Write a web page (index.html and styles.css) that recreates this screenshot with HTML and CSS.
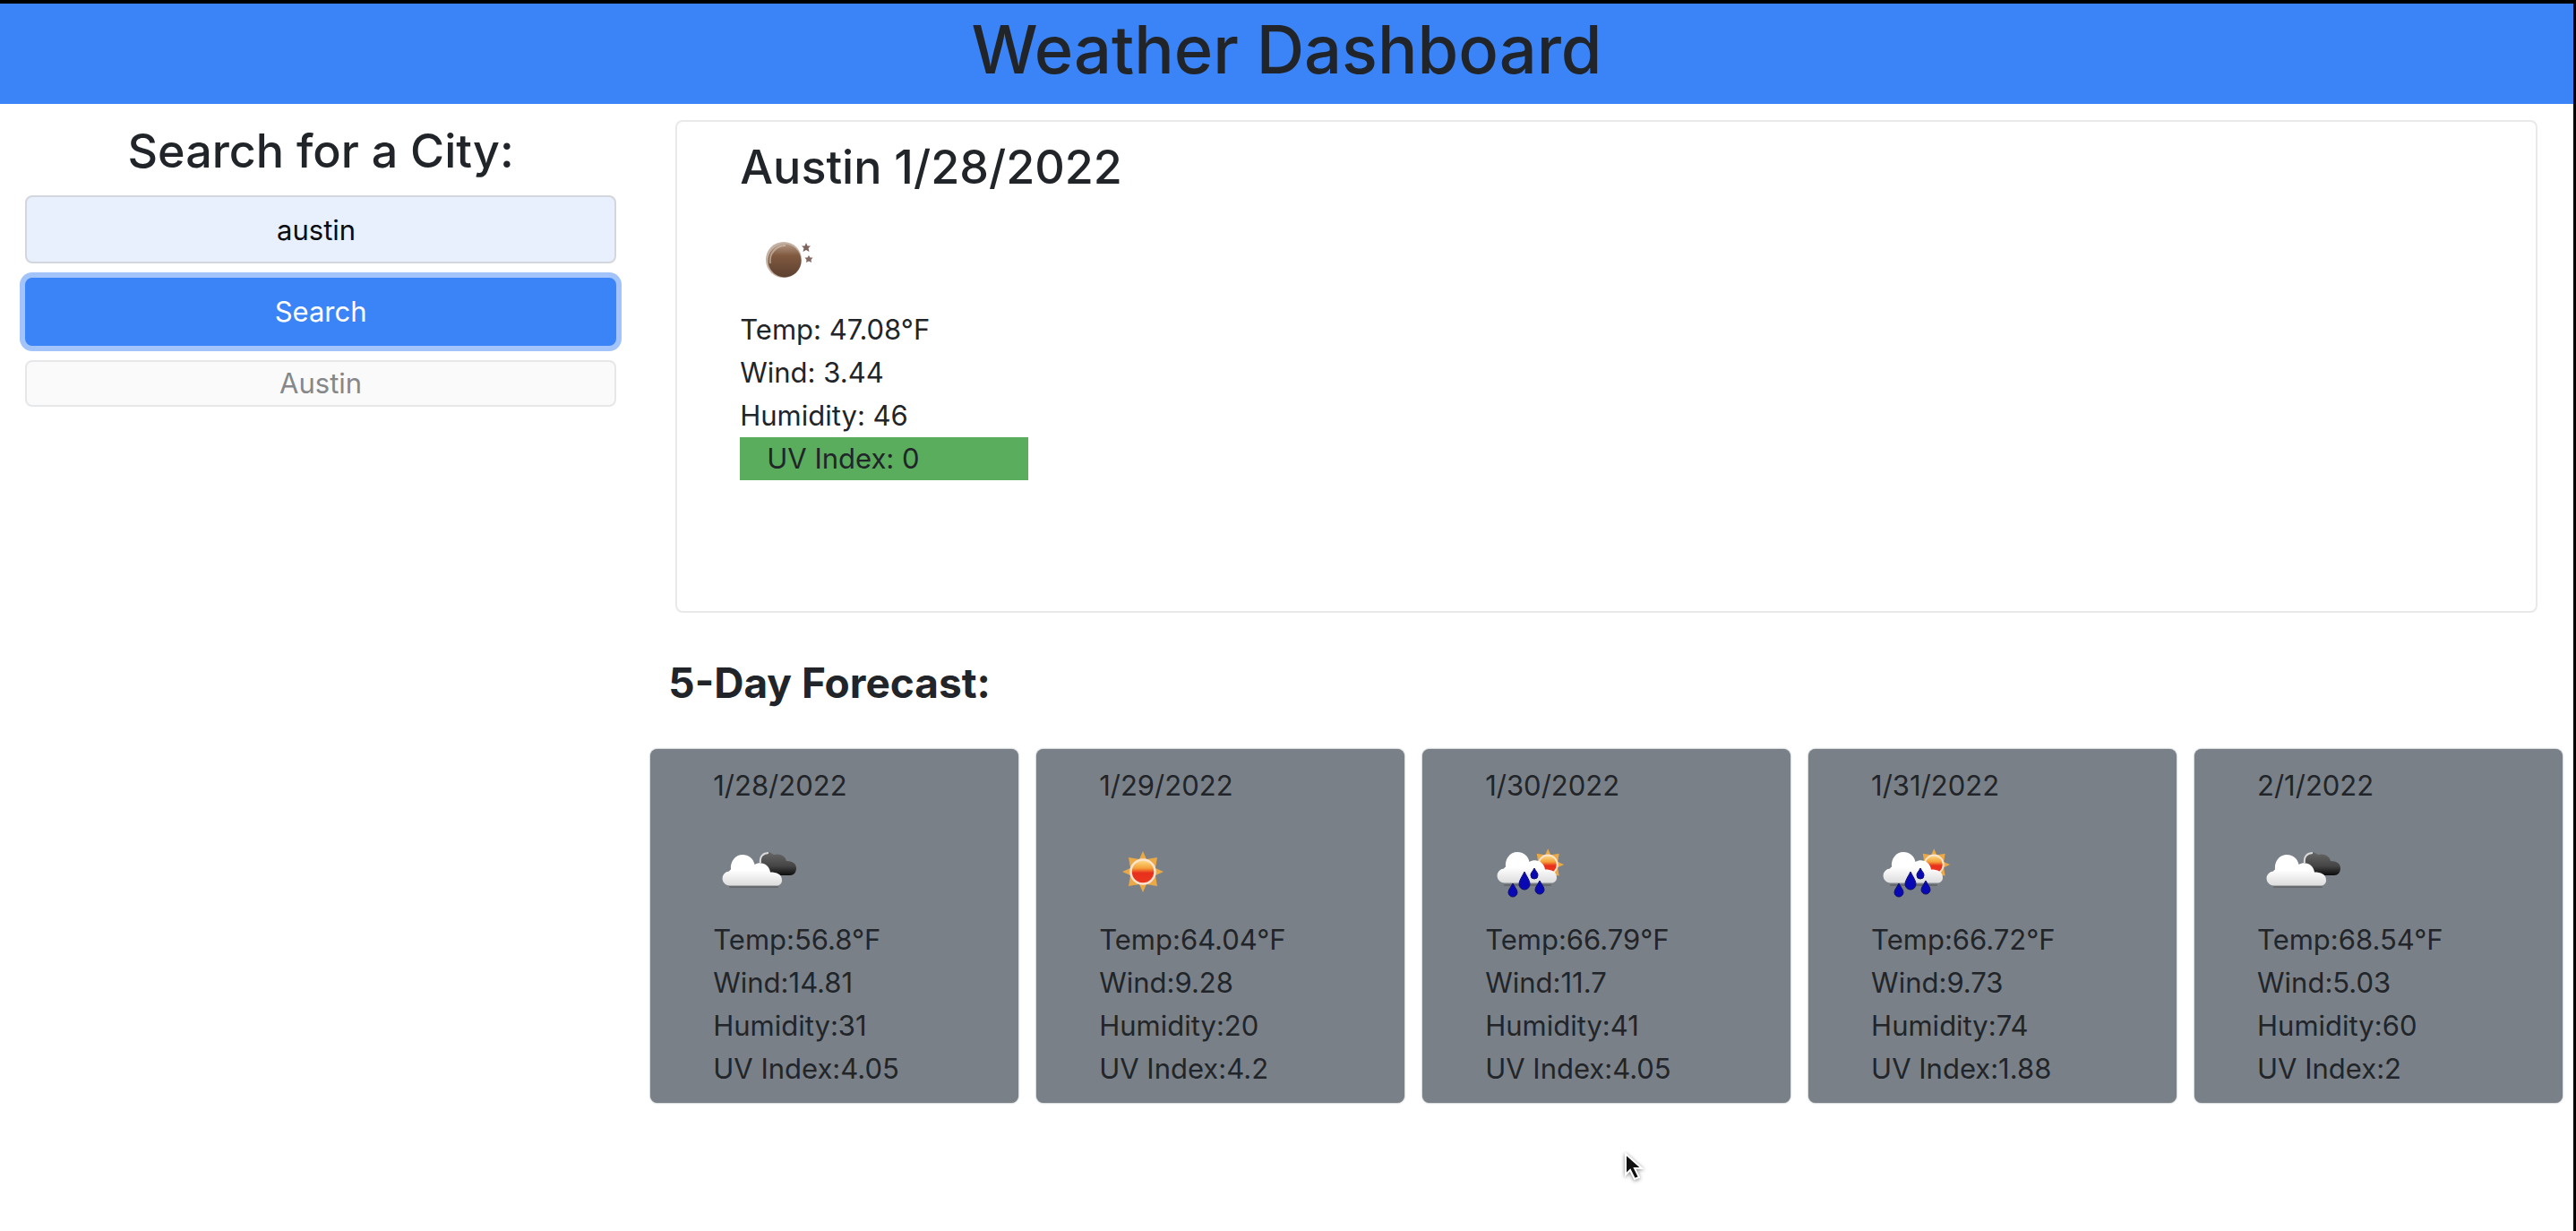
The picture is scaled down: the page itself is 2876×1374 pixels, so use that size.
FILE: index.html
```html
<!DOCTYPE html>
<html lang="en">
<head>
<meta charset="utf-8">
<meta name="viewport" content="width=device-width, initial-scale=1">
<title>Weather Dashboard</title>
<link rel="stylesheet" href="styles.css">
</head>
<body>
<svg class="sprite" aria-hidden="true">
  <defs>
    <linearGradient id="white-fill" x1="0" y1="0" x2="0" y2="1"><stop offset="0.5" stop-color="#fff"/><stop offset="1" stop-color="#dcdcdc"/></linearGradient>
    <linearGradient id="dark-fill" x1="0" y1="0" x2="0" y2="1"><stop offset="0.1" stop-color="#616161"/><stop offset="0.6" stop-color="#454545"/><stop offset="1" stop-color="#0c0c0c"/></linearGradient>
    <linearGradient id="sun-fill" x1="0" y1="0" x2="0" y2="1"><stop offset="0" stop-color="#fbe08a"/><stop offset="0.35" stop-color="#f5a13a"/><stop offset="0.55" stop-color="#e8301c"/><stop offset="1" stop-color="#e9391f"/></linearGradient>
    <linearGradient id="night-fill" x1="0" y1="0" x2="0" y2="1"><stop offset="0" stop-color="#b09380"/><stop offset="0.35" stop-color="#80593f"/><stop offset="1" stop-color="#5c4030"/></linearGradient>
    <symbol id="cloud-shape" viewBox="0 0 100 100">
      <path d="M19 69.500a8 8 0 0 1-1-16q1-1.500 2-2c-1-9 5-16.500 13-16.500c7 0 12 4 13.500 11c7-4.500 16.500 0 17.500 8.500c7 0 13 2 13 9c0 4-3 6-6 6z" fill="url(#white-fill)"/>
    </symbol>
    <symbol id="icon-clouds" viewBox="0 0 100 100">
      <path d="M53 46c-2-8 2-13 7-14c4 0 6 2 8 3c7-2 13 2 14 7c7 0 11 3 11 8c0 5-3 8-7 8H62z" fill="url(#dark-fill)"/>
      <path d="M53 44c-1-7 3-11 9-11" fill="none" stroke="#d9dada" stroke-width="2"/>
      <path d="M19 71h53" stroke="#666a6c" stroke-width="2" stroke-linecap="round"/>
      <use href="#cloud-shape" width="100" height="100"/>
    </symbol>
    <symbol id="icon-sun" viewBox="0 0 100 100">
      <path d="M49 31l4 9 12-2-2 12 9 4-9 4 2 12-12-2-4 9-4-9-12 2 2-12-9-4 9-4-2-12 12 2z" fill="#eba945"/>
      <circle cx="49" cy="54" r="13.500" fill="url(#sun-fill)" stroke="#fae3cf" stroke-width="2.500"/>
    </symbol>
    <symbol id="icon-rain" viewBox="0 0 100 100">
      <use href="#icon-sun" x="32" y="4" width="78" height="78"/>
      <path d="M22 69h51" stroke="#666a6c" stroke-width="2" stroke-linecap="round"/>
      <use href="#cloud-shape" x="3" y="-3" width="100" height="100"/>
      <g fill="#0808b4" stroke="#10106c">
        <path d="M44 54c3 6 6 10 6 14a6 6 0 0 1-12 0c0-4 3-8 6-14z"/>
        <path d="M55 50c2 4 4 5 4 8a4 4 0 0 1-8 0c0-3 2-4 4-8z"/>
        <path d="M31 67c2 4 5 7 5 10a5 5 0 0 1-10 0c0-3 3-6 5-10z"/>
        <path d="M61 64c2 4 5 7 5 10a5 5 0 0 1-10 0c0-3 3-6 5-10z"/>
      </g>
    </symbol>
    <symbol id="icon-night" viewBox="0 0 100 100">
      <circle cx="49" cy="50" r="20" fill="#c4b1a5"/>
      <circle cx="50" cy="51" r="18.500" fill="url(#night-fill)"/>
      <path d="M34 54a17 17 0 0 1 17-20" fill="none" stroke="#d8c9be" stroke-width="2" opacity="0.600"/>
      <path d="M74 31l1.500 3.500 3.500 0-2.500 2.500 1 4-3.500-2-3.500 2 1-4-2.500-2.500 3.500 0z" fill="#7b625b"/>
      <path d="M77 45l1.500 2.500 3 0-2 2.500 0.500 3-3-1.500-3 1.500 0.500-3-2-2.500 3 0z" fill="#846a62"/>
    </symbol>
  </defs>
</svg>

<header class="site-header"><h1>Weather Dashboard</h1></header>

<div class="layout">
  <aside class="sidebar">
    <form class="search">
      <h2><label for="city">Search for a City:</label></h2>
      <input class="city-input" id="city" type="text" value="austin">
      <button class="search-button" type="button">Search</button>
      <button class="history-button" type="button">Austin</button>
    </form>
  </aside>

  <main class="content">
    <section class="current">
      <h2>Austin 1/28/2022</h2>
      <svg class="weather-icon" role="img" aria-label="Clear night"><use href="#icon-night"/></svg>
      <p>Temp: 47.08°F</p>
      <p>Wind: 3.44</p>
      <p>Humidity: 46</p>
      <p class="uv">UV Index: 0</p>
    </section>

    <h3 class="forecast-title">5-Day Forecast:</h3>
    <section class="forecast">
      <article class="day">
        <p>1/28/2022</p>
        <svg class="weather-icon" role="img" aria-label="Cloudy"><use href="#icon-clouds"/></svg>
        <p>Temp:56.8°F</p><p>Wind:14.81</p><p>Humidity:31</p><p>UV Index:4.05</p>
      </article>
      <article class="day">
        <p>1/29/2022</p>
        <svg class="weather-icon" role="img" aria-label="Sunny"><use href="#icon-sun"/></svg>
        <p>Temp:64.04°F</p><p>Wind:9.28</p><p>Humidity:20</p><p>UV Index:4.2</p>
      </article>
      <article class="day">
        <p>1/30/2022</p>
        <svg class="weather-icon" role="img" aria-label="Rain"><use href="#icon-rain"/></svg>
        <p>Temp:66.79°F</p><p>Wind:11.7</p><p>Humidity:41</p><p>UV Index:4.05</p>
      </article>
      <article class="day">
        <p>1/31/2022</p>
        <svg class="weather-icon" role="img" aria-label="Rain"><use href="#icon-rain"/></svg>
        <p>Temp:66.72°F</p><p>Wind:9.73</p><p>Humidity:74</p><p>UV Index:1.88</p>
      </article>
      <article class="day">
        <p>2/1/2022</p>
        <svg class="weather-icon" role="img" aria-label="Cloudy"><use href="#icon-clouds"/></svg>
        <p>Temp:68.54°F</p><p>Wind:5.03</p><p>Humidity:60</p><p>UV Index:2</p>
      </article>
    </section>
  </main>
</div>

<svg class="pointer" viewBox="0 0 24 34" aria-hidden="true"><path d="M2 2v23l5-5 5 10 5-2-5-10h8z" fill="#111" stroke="#fff" stroke-width="2"/></svg>
</body>
</html>
```
FILE: styles.css
```css
* {
  box-sizing: border-box;
}

body {
  position: relative;
  min-height: 100vh;
  margin: 0;
  border-top: 4px solid #000;
  border-right: 3px solid #000;
  background: #fff;
  color: #212529;
  font-family: Inter, "Liberation Sans", sans-serif;
  font-size: 31px;
  line-height: 48px;
}

h1,
h2,
h3,
p {
  margin: 0;
}

h1,
h2 {
  font-weight: 500;
}

h2 {
  font-size: 52px;
  line-height: 70px;
}

.sprite {
  position: absolute;
  width: 0;
  height: 0;
}

.site-header {
  padding-bottom: 10px;
  background: #3b84f7;
  text-align: center;
}

h1 {
  font-size: 74px;
  line-height: 102px;
}

.layout {
  display: grid;
  grid-template-columns: 1fr 3fr;
}

.sidebar {
  padding: 18px 30px 0 28px;
}

.search {
  display: flex;
  flex-direction: column;
  gap: 16px;
  text-align: center;
}

.search h2 {
  margin-bottom: -2px;
}

.city-input,
.search-button,
.history-button {
  width: 100%;
  border: 2px solid;
  border-radius: 8px;
  font: inherit;
  text-align: center;
}

.city-input {
  height: 76px;
  padding: 0 12px 0 2px;
  border-color: #d3d6dc;
  background: #e9f0fd;
  color: #0b0b12;
}

.search-button {
  height: 76px;
  border-color: #3b84f7;
  background: #3b84f7;
  color: #fff;
  box-shadow: 0 0 0 6px #a2c4fb;
}

.history-button {
  height: 52px;
  padding: 0;
  border-color: #e6e7e9;
  background: #fafafa;
  color: #85888b;
}

.content {
  padding: 18px 12px 0 8px;
}

.current {
  min-height: 550px;
  margin: 0 28px;
  padding: 16px 70px;
  border: 2px solid #e9e9e9;
  border-radius: 8px;
}

.weather-icon {
  display: block;
  width: 100px;
  height: 100px;
}

.current .weather-icon {
  margin: 18px 0 4px;
}

.uv {
  width: 322px;
  padding-left: 30px;
  background: #5aad5c;
}

.forecast-title {
  margin: 48px 0 44px;
  padding-left: 20px;
  font-size: 46px;
  font-weight: 700;
  line-height: 60px;
}

.forecast {
  display: grid;
  grid-template-columns: repeat(5, 1fr);
  gap: 20px;
}

.day {
  padding: 17px 20px 14px 70px;
  border-radius: 8px;
  background: #798087;
  box-shadow: 0 0 2px #798087;
}

.day .weather-icon {
  margin: 18px 0 6px;
}

.pointer {
  position: absolute;
  top: 1282px;
  left: 1813px;
  width: 24px;
  height: 34px;
  filter: drop-shadow(0 1px 2px #888);
}
```
